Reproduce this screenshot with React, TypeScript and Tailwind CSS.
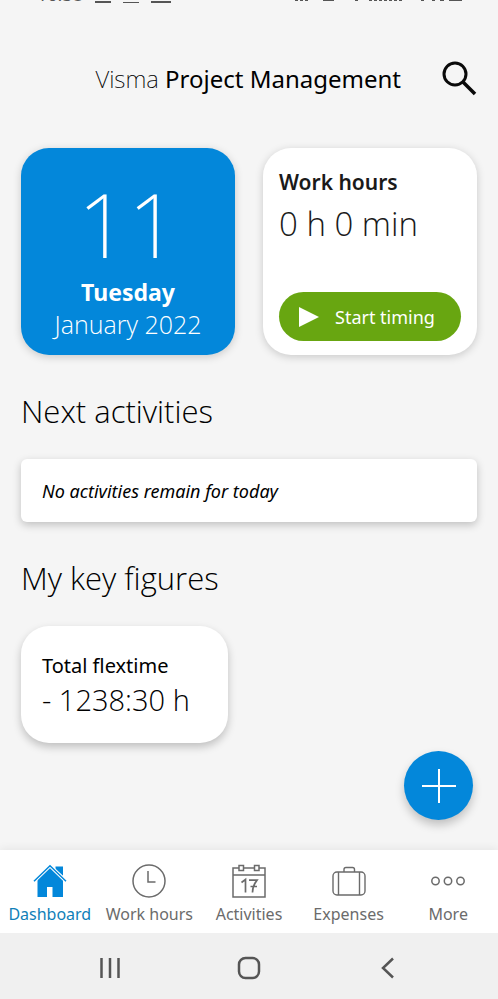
import type { ReactNode } from 'react';

const noto = "font-['Noto_Sans','Open_Sans',sans-serif]";
const light = "font-['Open_Sans','Noto_Sans',sans-serif] font-light";

function StatusBar() {
  return (
    <div className="flex h-[3px] items-end justify-between overflow-hidden pl-[37px] pr-8 text-[#555]">
      <div className="flex items-end gap-3">
        <span className="text-lg leading-none">16:38</span>
        <span className="h-[2px] w-4 bg-current" />
        <span className="h-px w-4 bg-current" />
        <span className="h-[2px] w-5 bg-current" />
      </div>
      <svg width="172" height="3" viewBox="0 0 172 3" fill="none" stroke="currentColor" strokeWidth="2" aria-hidden="true">
        <path d="M1 0H16M75 0H110" strokeDasharray="3 2" />
        <path d="M29 0H40M155 0H168M61 0h3M127 0h3M138 0h3M146 0h4" />
      </svg>
    </div>
  );
}

function HomeIcon() {
  return (
    <svg width="34" height="34" viewBox="0 0 34 34" fill="currentColor" aria-hidden="true">
      <path d="M22.500 2.500H30V12l-7.500-6.500z" />
      <path d="M17 3 4.500 15V33H14V23h5.500v10H30V15z" />
      <path d="M1 17.200 17 1.800 33 17.200" fill="none" stroke="#fff" strokeWidth="3.600" />
      <path d="M1 17.200 17 1.800 33 17.200" fill="none" stroke="currentColor" strokeWidth="1.500" />
    </svg>
  );
}

function ClockIcon() {
  return (
    <svg width="34" height="34" viewBox="0 0 34 34" fill="none" stroke="currentColor" strokeWidth="1.500" aria-hidden="true">
      <circle cx="17" cy="17" r="16" />
      <path d="M16 7V18h7.500" />
    </svg>
  );
}

function CalendarIcon() {
  return (
    <svg width="34" height="34" viewBox="0 0 34 34" fill="none" stroke="currentColor" strokeWidth="1.500" aria-hidden="true">
      <path d="M7 4H1v29h32V4h-6M11.500 4h11M1 11h32" />
      <path d="M7 1.500h4.500v5H7zM22.500 1.500H27v5h-4.500z" />
      <path d="M9.500 18.500l4-3v13M17 16.200h8c-2.500 3.200-4.500 7-4.500 12.300M18.500 22.500h6.500" strokeWidth="1.700" />
    </svg>
  );
}

function SuitcaseIcon() {
  return (
    <svg width="34" height="34" viewBox="0 0 34 34" fill="none" stroke="currentColor" strokeWidth="1.400" aria-hidden="true">
      <rect x="1" y="8" width="32" height="23" rx="4" />
      <path d="M6.500 8v23M27.500 8v23M12 8V5.500A2 2 0 0 1 14 3.500h6.500a2 2 0 0 1 2 2V8" />
    </svg>
  );
}

function DotsIcon() {
  return (
    <svg width="34" height="34" viewBox="0 0 34 34" fill="none" stroke="currentColor" strokeWidth="1.500" aria-hidden="true">
      <circle cx="4.500" cy="17" r="3.700" />
      <circle cx="17" cy="17" r="3.700" />
      <circle cx="29.500" cy="17" r="3.700" />
    </svg>
  );
}

const tabs: { label: string; icon: ReactNode; active?: boolean }[] = [
  { label: 'Dashboard', icon: <HomeIcon />, active: true },
  { label: 'Work hours', icon: <ClockIcon /> },
  { label: 'Activities', icon: <CalendarIcon /> },
  { label: 'Expenses', icon: <SuitcaseIcon /> },
  { label: 'More', icon: <DotsIcon /> },
];

export default function App() {
  return (
    <div className={`flex min-h-screen flex-col bg-[#f5f5f5] text-black ${noto}`}>
      <StatusBar />
      <header className="mt-14 flex h-10 items-center justify-end gap-10 pr-[21px]">
        <h1 className="text-2xl whitespace-nowrap">
          <span className="font-extralight">Visma</span> Project Management
        </h1>
        <button type="button" aria-label="Search">
          <svg width="36" height="36" viewBox="0 0 36 36" fill="none" stroke="#0a0a0a" strokeWidth="3" aria-hidden="true">
            <circle cx="14" cy="13" r="11" />
            <path d="M22 21 34 33" strokeWidth="3.500" />
          </svg>
        </button>
      </header>

      <main className="flex flex-1 flex-col px-[21px] pt-[49px]">
        <div className="grid grid-cols-2 gap-7">
          <section className="flex h-[207px] flex-col items-center rounded-[28px] bg-[#0387da] pt-7 text-white shadow-[0_2px_8px_rgba(0,0,0,0.18)]">
            <p className="text-[88px] leading-24 font-extralight">11</p>
            <p className="mt-1 text-[23px] leading-8 font-bold">Tuesday</p>
            <p className={`text-[25px] leading-8 ${light}`}>January 2022</p>
          </section>
          <section className="flex h-[207px] flex-col rounded-[28px] bg-white px-4 pt-5 pb-3.5 text-[#1a1a1a] shadow-[0_2px_8px_rgba(0,0,0,0.18)]">
            <h2 className="text-[21px] leading-7 font-semibold">Work hours</h2>
            <p className={`mt-1 text-[33px] leading-12 ${light}`}>0 h 0 min</p>
            <button
              type="button"
              className="mt-auto flex h-[49px] items-center gap-4 rounded-full bg-[#68a611] pl-5 text-lg whitespace-nowrap text-white"
            >
              <svg width="20" height="20" viewBox="0 0 20 20" fill="currentColor" aria-hidden="true">
                <path d="M0 0 20 10 0 20z" />
              </svg>
              Start timing
            </button>
          </section>
        </div>

        <h2 className={`mt-9 text-[31px] leading-10 ${light}`}>Next activities</h2>
        <section className="mt-7 flex h-[63px] items-center rounded-md bg-white px-[21px] text-lg italic shadow-[0_3px_8px_rgba(0,0,0,0.22)]">
          No activities remain for today
        </section>

        <h2 className={`mt-9 text-[31px] leading-10 ${light}`}>My key figures</h2>
        <div className="mt-7 grid grid-cols-[5fr_6fr]">
          <section className="flex h-[117px] flex-col rounded-[28px] bg-white px-[21px] pt-6 shadow-[0_4px_9px_rgba(0,0,0,0.22)]">
            <p className="text-xl leading-8">Total flextime</p>
            <p className={`text-[29px] leading-9 whitespace-nowrap ${light}`}>- 1238:30 h</p>
          </section>
        </div>
      </main>

      <footer className="relative">
        <button
          type="button"
          aria-label="Add"
          className="absolute right-[25px] bottom-full mb-[30px] flex size-[69px] items-center justify-center rounded-full bg-[#0387da] text-white shadow-[0_5px_10px_rgba(0,0,0,0.22)]"
        >
          <svg width="34" height="34" viewBox="0 0 34 34" fill="none" stroke="currentColor" strokeWidth="2" aria-hidden="true">
            <path d="M17 0v34M0 17h34" />
          </svg>
        </button>
        <nav className="grid h-[83px] grid-cols-5 bg-white shadow-[0_-2px_8px_rgba(0,0,0,0.06)]">
          {tabs.map((t) => (
            <a
              key={t.label}
              href="#"
              className={`flex flex-col items-center gap-1 pt-3.5 whitespace-nowrap ${t.active ? 'text-[#0387da]' : 'text-[#6b6b6b]'}`}
            >
              {t.icon}
              <span className={`text-base leading-6 ${t.active ? 'text-[#0f80b8]' : ''}`}>{t.label}</span>
            </a>
          ))}
        </nav>
        <div className="relative flex h-[66px] items-center justify-around bg-[#f0f0f0] px-10 pt-1">
          <button type="button" aria-label="Recent apps">
            <svg width="24" height="24" viewBox="0 0 24 24" fill="none" stroke="#555" strokeWidth="2.500" aria-hidden="true">
              <path d="M3.500 2v20M12 2v20M20.500 2v20" />
            </svg>
          </button>
          <button type="button" aria-label="Home">
            <svg width="24" height="24" viewBox="0 0 24 24" fill="none" stroke="#555" strokeWidth="2.500" aria-hidden="true">
              <rect x="2" y="2" width="20" height="20" rx="6.500" />
            </svg>
          </button>
          <button type="button" aria-label="Back">
            <svg width="24" height="24" viewBox="0 0 24 24" fill="none" stroke="#555" strokeWidth="2.500" aria-hidden="true">
              <path d="M17 2.500 7 12l10 9.500" />
            </svg>
          </button>
        </div>
      </footer>
    </div>
  );
}
